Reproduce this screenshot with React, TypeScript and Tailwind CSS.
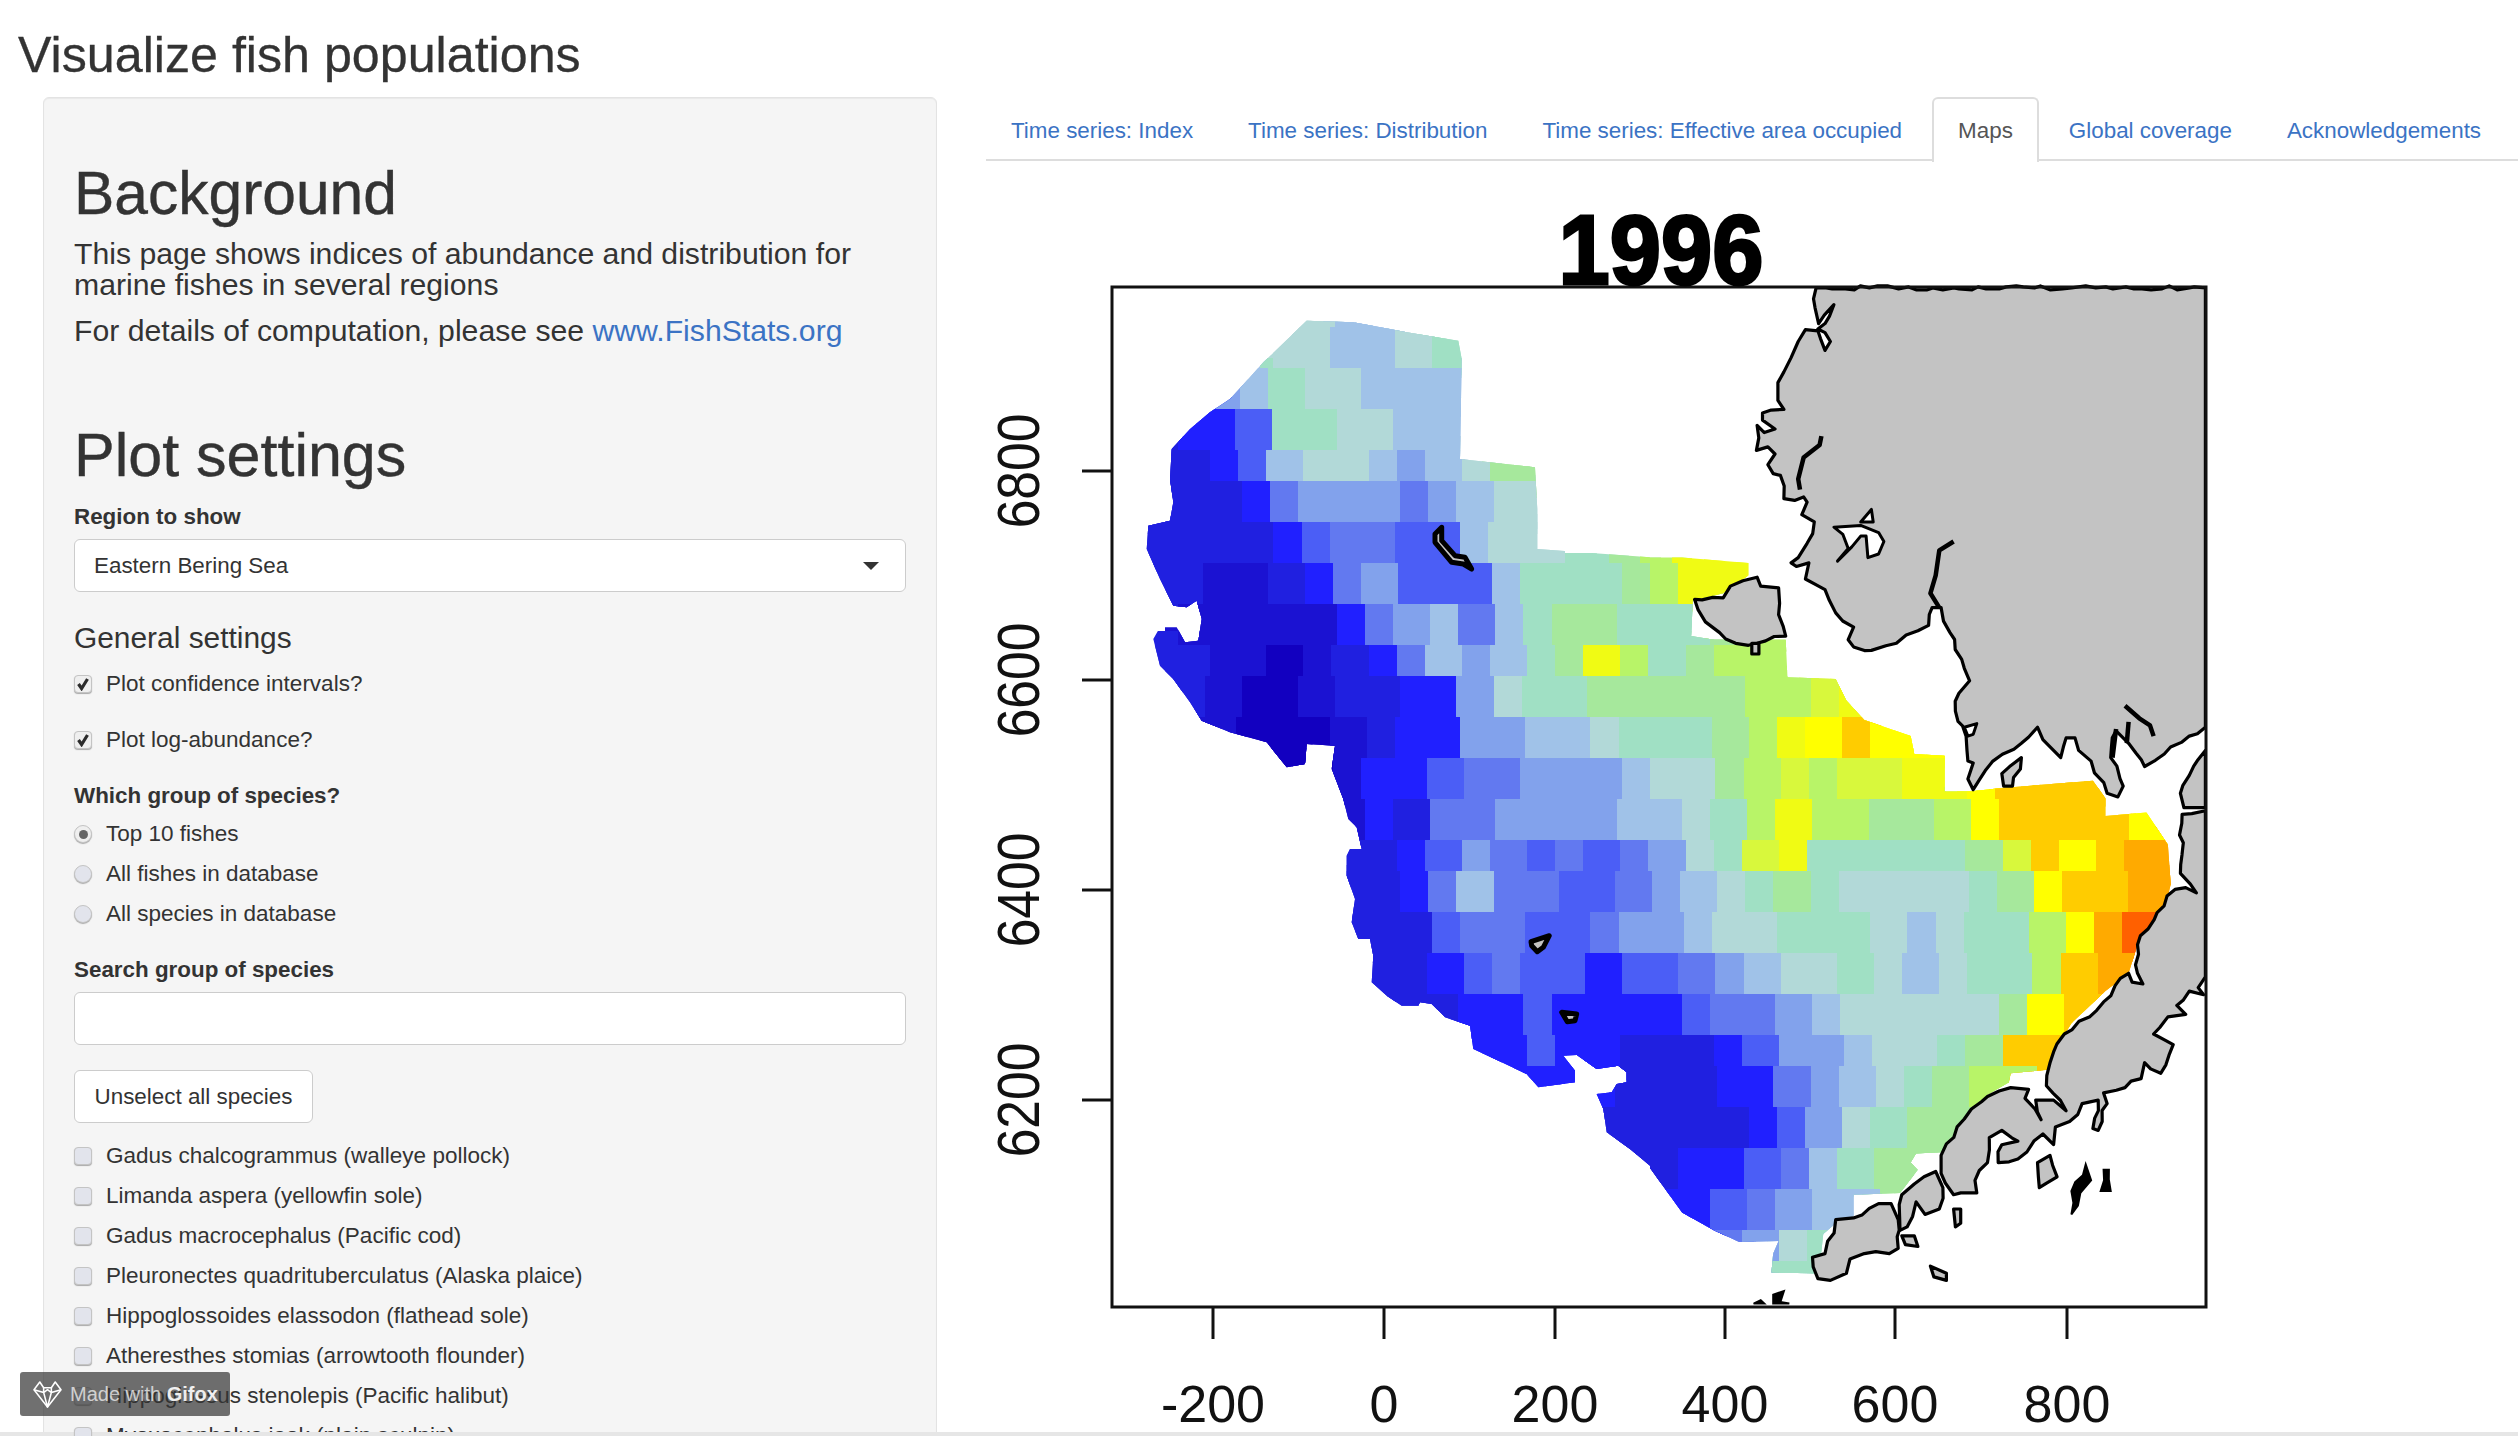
const BLUE = "#3b73c4";

const tabs = [
  "Time series: Index",
  "Time series: Distribution",
  "Time series: Effective area occupied",
  "Maps",
  "Global coverage",
  "Acknowledgements",
];

const species = [
  "Gadus chalcogrammus (walleye pollock)",
  "Limanda aspera (yellowfin sole)",
  "Gadus macrocephalus (Pacific cod)",
  "Pleuronectes quadrituberculatus (Alaska plaice)",
  "Hippoglossoides elassodon (flathead sole)",
  "Atheresthes stomias (arrowtooth flounder)",
  "Hippoglossus stenolepis (Pacific halibut)",
  "Myoxocephalus jaok (plain sculpin)",
];

const palette: Record<string, string> = {
  a: "#1200c0",
  z: "#1b12d2",
  b: "#2020e0",
  c: "#2020ff",
  d: "#4b5ef6",
  e: "#6279f0",
  f: "#82a2ec",
  g: "#a0c2e8",
  h: "#b2d9d8",
  i: "#a0e0c4",
  j: "#a6e89c",
  k: "#b8f468",
  l: "#d8f83c",
  m: "#f0fb14",
  n: "#ffff00",
  o: "#ffcc00",
  p: "#ffaa00",
  q: "#ff6000",
};

// density cells, one char per cell, pitch 31.7 x 39 from (1143, 290.5)
const cells = [
  ".....hgghi",
  "....hhgghi",
  "..fgihhggg",
  ".ccdiihhgg",
  "bbcdghhgfghjj",
  "bbbcefffefghh",
  "bbbbcdeeddghh",
  "bbzzbcefdddgiiijkmmm",
  ".zzzzzcefgegijjiiijk",
  "bbzzazbcegfgijmkijkk",
  ".bzaazbbccfhiijjjjjkklm",
  ".zzaaazbccffgghiiijkmnonn",
  "..zzaazccdeefffghhjklkllmmnoooo",
  "......zcbeeffffgghikmkkjjknoooonn",
  "......bbcdfededefhilmiiiiijlonopp",
  "......bbcegeeddefghijihhhhijnoopp",
  "......bbbdeeddeffghhiiihghiiknpqq",
  ".......bbcdeddcddefghhihghiikop",
  "........bbccdccccdeefghhhhhjnoo",
  "..........ccdccbbbcdffghhijoo",
  "............cccbbbccefghijkk",
  "..............bbbbbcdfhijj",
  "...............bbccdegijj",
  "................ccdefgg",
  "................ccefhi",
  "...................iii",
];

// crops of the plot were read at different scales, these map them back to page px
const z5 = (p: number[]) => mapPts(p, 1130, 300, 3);
const z6 = (p: number[]) => mapPts(p, 1650, 280, 2.8);
const z7 = (p: number[]) => mapPts(p, 1130, 800, 3);
const z8 = (p: number[]) => mapPts(p, 1650, 760, 2.8);

function mapPts(p: number[], ox: number, oy: number, s: number) {
  const out: string[] = [];
  for (let i = 0; i < p.length; i += 2) {
    out.push(`${(ox + p[i] / s).toFixed(1)},${(oy + p[i + 1] / s).toFixed(1)}`);
  }
  return out.join(" ");
}

// breaks long segments up and nudges the points so the coast reads as a real shoreline
function rough(points: string) {
  const pts = points.split(" ").map((s) => s.split(",").map(Number));
  const out: string[] = [];
  let seed = 7;
  pts.forEach(([x, y], i) => {
    const [nx, ny] = pts[(i + 1) % pts.length];
    const len = Math.hypot(nx - x, ny - y);
    const steps = Math.max(1, Math.floor(len / 9));
    const onEdge = (px: number, qx: number) => px > 2204 && qx > 2204;
    for (let k = 0; k < steps; k++) {
      seed = (seed * 31 + 11) % 97;
      const dx = onEdge(x, nx) || k === 0 ? 0 : (seed % 5) - 2;
      const dy = onEdge(x, nx) || k === 0 ? 0 : ((seed >> 2) % 5) - 2;
      out.push(`${(x + ((nx - x) * k) / steps + dx).toFixed(1)},${(y + ((ny - y) * k) / steps + dy).toFixed(1)}`);
    }
  });
  return out.join(" ");
}

const surveyOutline = [
  z5([530, 65, 670, 70, 780, 90, 830, 100, 985, 125, 995, 180, 990, 480, 1215, 505, 1222, 630, 1222, 750, 1559, 775]),
  z6([0, 780, 90, 780, 275, 795, 275, 830, 205, 880, 120, 900, 115, 1000, 180, 1010, 380, 1010, 385, 1115, 520, 1120, 550, 1180, 600, 1235, 730, 1280, 740, 1330, 825, 1335, 825, 1435, 895, 1435, 985, 1425, 1240, 1405]),
  z8([1275, 110, 1275, 160, 1390, 150, 1450, 240, 1458, 350, 1450, 385, 1365, 520, 1340, 600, 1275, 650, 1180, 740, 1130, 820, 1115, 870, 1010, 880, 1005, 905, 945, 940, 890, 1000, 820, 1100, 745, 1105, 730, 1130, 750, 1150, 700, 1215, 570, 1220, 570, 1280, 520, 1300, 485, 1330, 480, 1380, 460, 1440, 340, 1438, 345, 1385, 360, 1350, 250, 1352, 180, 1320, 90, 1270, 0, 1145]),
  z7([1560, 1100, 1500, 1050, 1430, 1000, 1420, 930, 1400, 885, 1445, 880, 1460, 855, 1490, 850, 1490, 820, 1465, 800, 1400, 810, 1340, 768, 1300, 770, 1335, 815, 1335, 850, 1225, 865, 1190, 825, 1115, 790, 1030, 750, 1020, 680, 945, 655, 905, 615, 870, 610, 865, 620, 815, 620, 770, 590, 725, 550, 730, 470, 720, 420, 685, 420, 665, 370, 675, 300, 650, 230, 650, 170, 660, 150, 695, 150, 680, 85, 655, 60, 640, 0]),
  z5([640, 1500, 605, 1410, 615, 1340, 530, 1335, 525, 1395, 470, 1405, 410, 1330, 300, 1300, 215, 1265, 180, 1210, 130, 1140, 90, 1100, 70, 1020, 90, 985, 140, 985, 165, 1030, 205, 1025, 215, 960, 200, 905, 170, 925, 130, 920, 90, 840, 50, 750, 55, 680, 120, 665, 130, 610, 120, 540, 125, 450, 180, 390, 240, 340, 300, 300, 355, 240, 400, 190]),
].join(" ");

const landShapes = [
  // mainland
  z6([465, 25, 462, 80, 472, 125, 515, 72, 490, 125, 470, 140, 490, 150, 505, 175, 490, 200, 470, 145, 435, 142, 415, 175, 395, 220, 375, 260, 358, 290, 358, 340, 375, 365, 315, 375, 315, 395, 350, 420, 320, 430, 300, 410, 298, 480, 330, 470, 350, 490, 330, 520, 345, 545, 365, 550, 375, 615, 405, 620, 430, 610, 440, 625, 425, 660, 460, 680, 440, 740, 415, 780, 395, 795, 410, 805, 445, 795, 435, 840, 490, 870, 520, 935, 570, 975, 555, 1010, 570, 1030, 620, 1040, 690, 1020, 750, 985, 780, 970, 790, 920, 815, 920, 840, 990, 880, 1090, 895, 1125, 865, 1160, 855, 1210, 885, 1280, 890, 1350, 905, 1355, 890, 1400, 905, 1430, 960, 1350, 1040, 1300, 1085, 1255, 1100, 1290, 1150, 1340, 1165, 1285, 1190, 1285, 1200, 1320, 1235, 1350, 1280, 1440, 1310, 1450, 1325, 1420, 1290, 1340, 1305, 1265, 1340, 1300, 1385, 1365, 1440, 1330, 1510, 1280, 1555, 1255, 1555, 25]),
  // right edge strip
  z6([1555, 1320, 1510, 1390, 1485, 1440, 1495, 1480, 1555, 1480]),
  // St Lawrence
  z6([125, 897, 205, 893, 225, 860, 260, 845, 300, 835, 310, 860, 360, 865, 360, 940, 380, 1000, 300, 1020, 240, 1020, 195, 990, 155, 960]),
  z6([285, 1020, 305, 1020, 305, 1050, 285, 1050]),
  z6([985, 1385, 1040, 1340, 1015, 1420, 990, 1420]),
  // peninsula
  z8([1490, 155, 1555, 145, 1555, 610, 1535, 640, 1550, 660, 1510, 650, 1475, 690, 1500, 715, 1450, 722, 1410, 770, 1465, 800, 1430, 880, 1385, 850, 1375, 895, 1330, 920, 1270, 935, 1280, 965, 1255, 1040, 1240, 1035, 1255, 955, 1210, 965, 1175, 1015, 1135, 1030, 1130, 1080, 1100, 1050, 1075, 1070, 1030, 1120, 975, 1130, 985, 1080, 1030, 1070, 985, 1040, 950, 1060, 945, 1130, 910, 1180, 915, 1215, 870, 1215, 850, 1220, 815, 1160, 815, 1110, 860, 1030, 900, 980, 945, 945, 1010, 920, 1060, 925, 1050, 950, 1095, 1010, 1080, 955, 1130, 955, 1165, 985, 1110, 915, 1130, 820, 1160, 770, 1270, 680, 1340, 600, 1350, 625, 1380, 630, 1365, 600, 1365, 520, 1420, 430, 1470, 365, 1500, 360, 1530, 375, 1485, 320]),
  z8([705, 1220, 740, 1190, 800, 1155, 820, 1200, 810, 1260, 770, 1275, 745, 1240, 720, 1310, 700, 1320]),
  z8([455, 1395, 490, 1385, 520, 1290, 570, 1285, 640, 1245, 675, 1245, 695, 1290, 695, 1370, 670, 1385, 600, 1385, 560, 1400, 550, 1440, 505, 1460, 470, 1455]),
  z8([705, 1335, 740, 1335, 750, 1365, 715, 1360]),
  z8([785, 1420, 830, 1440, 830, 1460, 795, 1450]),
  z8([850, 1260, 870, 1260, 870, 1300, 855, 1310]),
  z8([1085, 1130, 1120, 1110, 1140, 1170, 1090, 1200]),
];

const smallIslands = [
  z5([935, 685, 915, 705, 915, 730, 965, 790, 1000, 795, 1025, 810, 1005, 775, 975, 770, 935, 725]),
  z7([1203, 428, 1258, 410, 1240, 445, 1222, 458, 1205, 440]),
  z7([1295, 640, 1340, 645, 1335, 665, 1312, 668]),
];

const blackBlobs = [
  z8([1220, 1135, 1235, 1180, 1205, 1215, 1180, 1275, 1180, 1210]),
  z8([1270, 1150, 1285, 1150, 1290, 1210, 1262, 1210]),
  z8([290, 1525, 310, 1515, 320, 1525]),
  z8([345, 1500, 375, 1490, 365, 1520, 390, 1525, 345, 1525]),
];

const inlets = [
  z6([480, 440, 475, 465, 430, 500, 415, 560, 420, 590]),
  z6([810, 920, 785, 880, 800, 830, 810, 760, 850, 735]),
  z6([1330, 1195, 1370, 1230, 1400, 1250, 1410, 1280]),
  z6([1340, 1240, 1335, 1300]),
  z6([1305, 1260, 1295, 1340]),
];

const whiteBays = [
  z6([515, 695, 590, 690, 640, 710, 655, 735, 640, 770, 610, 780, 605, 720, 590, 720, 565, 750, 525, 790, 555, 755, 540, 715]),
  z6([590, 680, 620, 645, 625, 680]),
  z6([880, 1255, 915, 1245, 905, 1275, 890, 1280]),
];

function BoxMark({ checked, radio }: { checked?: boolean; radio?: boolean }) {
  return (
    <span
      className={`relative flex h-[18px] w-[18px] shrink-0 items-center justify-center border border-[#c4c4c4] shadow-[0_1px_1px_#aaa] ${
        radio ? "rounded-full" : "rounded-[4px]"
      } ${checked ? "bg-[#efefef]" : "bg-[#e2e4ec]"}`}
    >
      {checked && !radio && (
        <svg viewBox="0 0 14 14" className="h-[14px] w-[14px]">
          <path d="M2.5 7 L5.6 11.5 L11.5 2" fill="none" stroke="#2b2b2b" strokeWidth="3.2" />
        </svg>
      )}
      {checked && radio && <span className="h-[9px] w-[9px] rounded-full bg-[#666]" />}
    </span>
  );
}

function Option({ label, checked, radio }: { label: string; checked?: boolean; radio?: boolean }) {
  return (
    <div className="flex h-[32px] items-center gap-[14px] text-[22.5px] leading-[32px] text-[#333]">
      <BoxMark checked={checked} radio={radio} />
      <span className="whitespace-nowrap">{label}</span>
    </div>
  );
}

function SidePanel() {
  return (
    <div className="ml-[43px] w-[894px] shrink-0 rounded-[6px] border border-[#e3e3e3] bg-[#f5f5f5] px-[30px] pt-[63px] shadow-[inset_0_1px_1px_rgba(0,0,0,0.05)]">
      <h1 className="text-[60.5px] leading-[64px] text-[#333] [-webkit-text-stroke:0.4px_#333]">Background</h1>
      <p className="mt-[14px] text-[30.2px] leading-[30.5px] text-[#333]">
        This page shows indices of abundance and distribution for marine fishes in several regions
      </p>
      <p className="mt-[15px] text-[30.2px] leading-[31px] text-[#333]">
        For details of computation, please see <a className="text-[#3b73c4]">www.FishStats.org</a>
      </p>

      <h1 className="mt-[77px] text-[61px] leading-[64px] text-[#333] [-webkit-text-stroke:0.4px_#333]">Plot settings</h1>
      <div className="mt-[14px] text-[22.4px] leading-[32px] font-bold text-[#333]">Region to show</div>
      <div className="mt-[6px] flex h-[53px] items-center justify-between rounded-[6px] border border-[#ccc] bg-white pr-[26px] pl-[19px] text-[22.4px] text-[#333]">
        <span>Eastern Bering Sea</span>
        <svg viewBox="0 0 16 8" className="h-[8px] w-[16px]">
          <path d="M0 0 H16 L8 8 Z" fill="#333" />
        </svg>
      </div>

      <h4 className="mt-[30px] text-[29.9px] leading-[32px] text-[#333]">General settings</h4>
      <div className="mt-[14px] flex flex-col gap-[24px]">
        <Option label="Plot confidence intervals?" checked />
        <Option label="Plot log-abundance?" checked />
      </div>

      <div className="mt-[24px] text-[22.4px] leading-[32px] font-bold text-[#333]">Which group of species?</div>
      <div className="mt-[6px] flex flex-col gap-[8px]">
        <Option label="Top 10 fishes" radio checked />
        <Option label="All fishes in database" radio />
        <Option label="All species in database" radio />
      </div>

      <div className="mt-[24px] text-[22.4px] leading-[32px] font-bold text-[#333]">Search group of species</div>
      <div className="mt-[6px] h-[53px] rounded-[6px] border border-[#ccc] bg-white" />

      <div className="mt-[25px] flex h-[53px] w-[239px] items-center justify-center rounded-[6px] border border-[#ccc] bg-white text-[22.4px] text-[#333]">
        Unselect all species
      </div>

      <div className="mt-[17px] flex flex-col gap-[8px]">
        {species.map((s) => (
          <Option key={s} label={s} />
        ))}
      </div>
    </div>
  );
}

function TabBar() {
  return (
    <div className="flex h-[64px] gap-[5px] border-b-2 border-[#ddd]">
      {tabs.map((t) =>
        t === "Maps" ? (
          <div
            key={t}
            className="mb-[-2px] flex h-[65px] items-center rounded-t-[6px] border-x-2 border-t-2 border-[#ddd] bg-white px-[24px] text-[22.4px] text-[#555]"
          >
            {t}
          </div>
        ) : (
          <div key={t} className="flex items-center px-[25px] pt-[5px] text-[22.4px] whitespace-nowrap" style={{ color: BLUE }}>
            {t}
          </div>
        ),
      )}
    </div>
  );
}

function MapPlot() {
  const yTicks: [number, string][] = [
    [472, "6800"],
    [681, "6600"],
    [891, "6400"],
    [1101, "6200"],
  ];
  const xTicks: [number, string][] = [
    [1213, "-200"],
    [1384, "0"],
    [1555, "200"],
    [1725, "400"],
    [1895, "600"],
    [2067, "800"],
  ];

  return (
    <svg viewBox="986 162 1532 1270" width="1532" height="1270" className="block" fontFamily="'Liberation Sans', Arial, sans-serif">
      <defs>
        <clipPath id="survey">
          <polygon points={surveyOutline} />
        </clipPath>
      </defs>

      <g clipPath="url(#survey)" shapeRendering="crispEdges">
        {/* underlay so the survey edge never shows a gap next to a wobbled cell */}
        {cells.map((row, r) =>
          row.split("").map((ch, c) =>
            ch === "." ? null : (
              <rect key={`u-${r}-${c}`} x={1143 + 31.7 * c - 10} y={290.5 + 39 * r - 10} width="52" height="59" fill={palette[ch]} />
            ),
          ),
        )}
        {cells.map((row, r) =>
          row.split("").map((ch, c) => {
            if (ch === ".") return null;
            // cells are not a true grid in the plot, so wobble their corners a little
            const jx = (((r * 7 + c * 13) % 5) - 2) * 1.8;
            const jy = (((r * 11 + c * 5) % 5) - 2) * 2;
            return (
              <rect key={`${r}-${c}`} x={1143 + 31.7 * c + jx} y={290.5 + 39 * r + jy} width="40" height="48" fill={palette[ch]} />
            );
          }),
        )}
      </g>

      {landShapes.map((pts, i) => (
        <polygon key={i} points={rough(pts)} fill="#c3c3c3" stroke="#000" strokeWidth="3.2" strokeLinejoin="round" />
      ))}
      {smallIslands.map((pts, i) => (
        <polygon key={i} points={pts} fill="#c3c3c3" stroke="#000" strokeWidth="5" strokeLinejoin="round" />
      ))}
      {whiteBays.map((pts, i) => (
        <polygon key={i} points={pts} fill="#fff" stroke="#000" strokeWidth="3" strokeLinejoin="round" />
      ))}
      {inlets.map((pts, i) => (
        <polyline key={i} points={pts} fill="none" stroke="#000" strokeWidth="4.5" strokeLinejoin="round" />
      ))}
      {blackBlobs.map((pts, i) => (
        <polygon key={i} points={rough(pts)} fill="#000" stroke="#000" strokeWidth="2" />
      ))}

      <rect x="1112" y="288" width="1094" height="1020" fill="none" stroke="#111" strokeWidth="3" />

      {yTicks.map(([y, label]) => (
        <g key={label}>
          <line x1="1082" y1={y} x2="1112" y2={y} stroke="#111" strokeWidth="3" />
          <text transform={`translate(1039 ${y}) rotate(-90) scale(0.86 1)`} textAnchor="middle" fontSize="60" fill="#111">
            {label}
          </text>
        </g>
      ))}
      {xTicks.map(([x, label]) => (
        <g key={label}>
          <line x1={x} y1="1308" x2={x} y2="1340" stroke="#111" strokeWidth="3" />
          <text x={x} y="1423" textAnchor="middle" fontSize="52" fill="#111">
            {label}
          </text>
        </g>
      ))}

      <text transform="translate(1661 285) scale(0.93 1)" textAnchor="middle" fontSize="99" fontWeight="700" fill="#000" stroke="#000" strokeWidth="3">
        1996
      </text>
    </svg>
  );
}

function GifoxBadge() {
  return (
    <div className="absolute top-[1372px] left-[20px] flex h-[44px] w-[210px] items-center gap-[8px] rounded-[3px] bg-[#333]/70 pl-[13px] text-[20px] whitespace-nowrap text-white/70">
      <svg viewBox="0 0 30 28" className="h-[27px] w-[29px] shrink-0" fill="none" stroke="#fff" strokeWidth="1.6" strokeLinejoin="round">
        <path d="M1 9 L7 1 L11 7 H19 L23 1 L29 9 L15 27 Z" />
        <path d="M1 9 L11 12 L15 27 L19 12 L29 9 M11 7 L11 12 M19 7 L19 12 M11 12 L15 9 L19 12" />
      </svg>
      <span>
        Made with <b className="text-white/90">Gifox</b>
      </span>
    </div>
  );
}

export default function App() {
  return (
    <div className="relative flex h-[1436px] w-[2518px] flex-col overflow-hidden bg-white font-['Liberation_Sans',Arial,sans-serif]">
      <h2 className="h-[97px] shrink-0 pt-[29px] pl-[18px] text-[50.2px] leading-[53px] text-[#333] [-webkit-text-stroke:0.3px_#333]">
        Visualize fish populations
      </h2>
      <div className="flex min-h-0 flex-1 items-start">
        <SidePanel />
        <div className="ml-[49px] flex-1">
          <TabBar />
          <MapPlot />
        </div>
      </div>
      <div className="h-[4px] shrink-0 bg-[#e6e6e6]" />
      <GifoxBadge />
    </div>
  );
}
